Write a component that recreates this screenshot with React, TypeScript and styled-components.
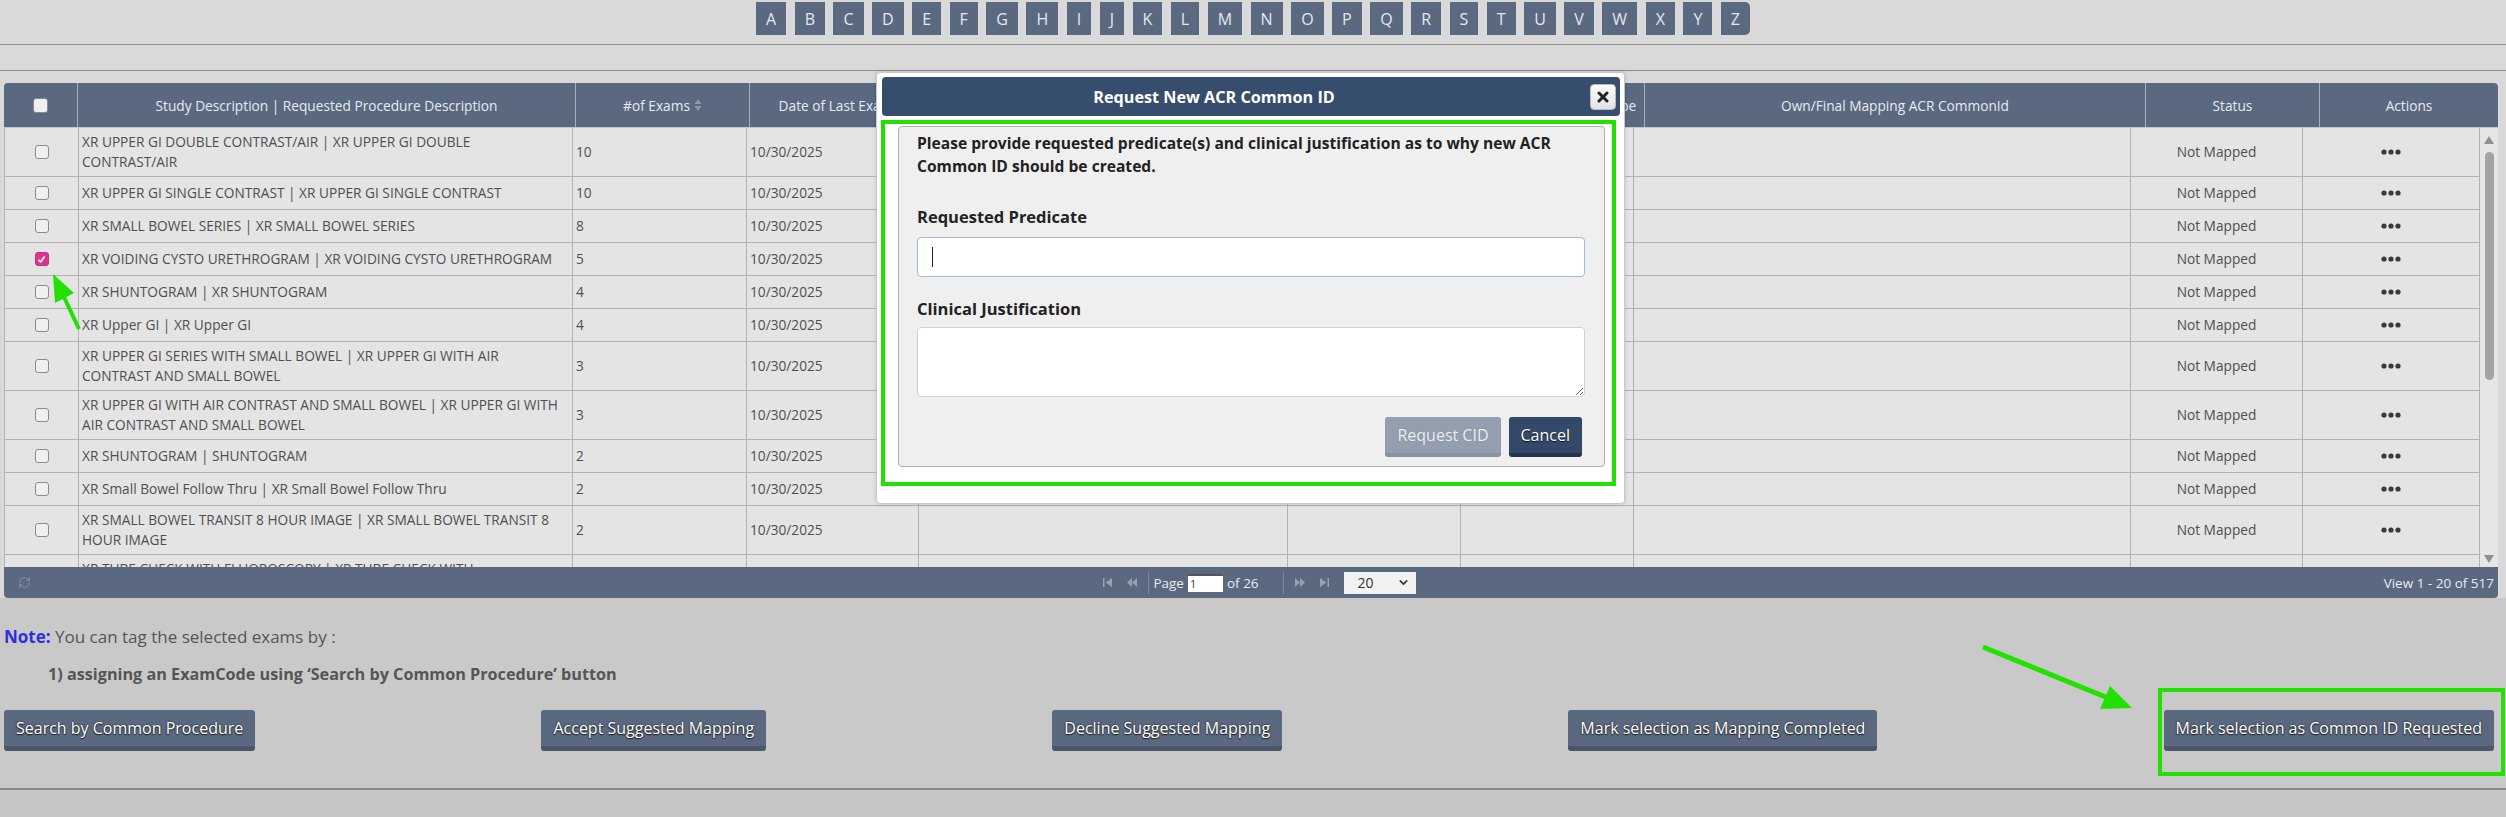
import React from "react";
import styled, { createGlobalStyle } from "styled-components";
import { RefreshCw, ChevronDown } from "lucide-react";

const Global = createGlobalStyle`
  html, body { margin: 0; padding: 0; }
  body { font-family: "Open Sans", "Liberation Sans", sans-serif; background: #c6c6c6; }
  * { box-sizing: border-box; }
`;

const Page = styled.div`
  position: relative;
  width: 2506px;
  height: 817px;
  overflow: hidden;
  display: flex;
  flex-direction: column;
  background: #c6c6c6;
`;

const TopArea = styled.div`
  background: #d9d9d9;
`;

const AlphaBar = styled.div`
  height: 45px;
  display: flex;
  justify-content: center;
  align-items: flex-start;
  gap: 8.5px;
  padding-top: 2px;
  border-bottom: 1px solid #8c8c8c;
`;

const Letter = styled.span`
  height: 33px;
  padding: 0 10px;
  background: #5a6880;
  color: #e4e9f0;
  font-size: 16px;
  display: flex;
  align-items: center;
  &:last-child {
    border-radius: 0 5px 5px 0;
  }
`;

const Band = styled.div`
  height: 26px;
  border-bottom: 1px solid #8c8c8c;
`;

const GridWrap = styled.div`
  margin: 12px 8px 0 4px;
  width: 2494px;
`;

const headCols = "74px 498px 174px 173px 372px 174px 176px 501px 174px 178px";
const bodyCols = "74px 494px 174px 172px 369px 173px 173px 497px 172px 177px";

const HeaderRow = styled.div`
  height: 45px;
  display: grid;
  grid-template-columns: ${headCols};
  background: #5a6880;
  border-radius: 4px 4px 0 0;
  border-bottom: 1px solid #c3c8d0;
  overflow: hidden;
`;

const HeadCell = styled.div`
  display: flex;
  align-items: center;
  justify-content: center;
  gap: 4px;
  color: #e6ebf1;
  font-size: 13.7px;
  border-right: 1px solid #a6afbd;
  white-space: nowrap;
  overflow: hidden;
  &:last-child {
    border-right: none;
  }
`;

const BodyWrap = styled.div`
  height: 439px;
  display: flex;
  background: #e4e4e4;
`;

const BodyRows = styled.div`
  width: 2476px;
  flex: none;
  overflow: hidden;
  border-left: 1px solid #b4b4b4;
`;

const Row = styled.div`
  display: grid;
  grid-template-columns: ${bodyCols};
  min-height: 33px;
  border-bottom: 1px solid #b2b2b2;
  background: #e4e4e4;
`;

const Cell = styled.div<{ $center?: boolean; $wide?: boolean }>`
  display: flex;
  align-items: center;
  justify-content: ${(p) => (p.$center ? "center" : "flex-start")};
  padding: 4px ${(p) => (p.$wide ? "11px" : "3px")} 4px 3px;
  border-right: 1px solid #b2b2b2;
  color: #4f4f4f;
  font-size: 13.7px;
  line-height: 20px;
`;

const Check = styled.span<{ $checked?: boolean; $size?: number }>`
  width: ${(p) => p.$size ?? 14}px;
  height: ${(p) => p.$size ?? 14}px;
  border-radius: 3px;
  border: 1px solid ${(p) => (p.$checked ? "#c62b7c" : "#8a8a8a")};
  background: ${(p) => (p.$checked ? "#d9368c" : "#f0f0f0")};
  display: inline-flex;
  align-items: center;
  justify-content: center;
`;

const Scrollbar = styled.div`
  width: 18px;
  flex: none;
  background: #e6e6e6;
  display: flex;
  flex-direction: column;
  align-items: center;
  padding: 8px 0 4px;
`;

const Thumb = styled.div`
  width: 9px;
  height: 228px;
  margin-top: 8px;
  border-radius: 5px;
  background: #a3a3a3;
`;

const ScrollGap = styled.div`
  flex: 1;
`;

const Pager = styled.div`
  height: 31px;
  background: #5a6880;
  border-radius: 0 0 4px 4px;
  display: grid;
  grid-template-columns: 1fr auto 1fr;
  align-items: center;
  padding: 0 4px 0 14px;
  color: #e8ecf1;
  font-size: 13.5px;
`;

const PagerCenter = styled.div`
  display: flex;
  align-items: center;
`;

const PagerSep = styled.span<{ $left?: number }>`
  width: 1px;
  height: 22px;
  background: #7d8aa0;
  margin: 0 4px 0 ${(p) => p.$left ?? 4}px;
`;

const PagerIcon = styled.span`
  display: inline-flex;
  width: 24px;
  justify-content: center;
  opacity: 0.55;
`;

const PageInput = styled.span`
  width: 35px;
  height: 18px;
  margin: 0 4px;
  background: #fff;
  border-top: 2px solid #555;
  color: #333;
  font-size: 11px;
  padding-left: 2px;
  line-height: 15px;
`;

const SelectBox = styled.span`
  width: 72px;
  height: 22px;
  margin-left: 8px;
  background: #f2f2f2;
  color: #333;
  display: flex;
  align-items: center;
  justify-content: space-between;
  padding: 0 6px 0 14px;
  font-size: 14px;
`;

const ViewText = styled.span`
  justify-self: end;
`;

const NoteSection = styled.div`
  background: #c9c9c9;
  padding: 29px 12px 37px 4px;
  border-bottom: 2px solid #8a8a8a;
`;

const NoteLine = styled.div`
  font-size: 17px;
  line-height: 20px;
  color: #555;
`;

const NoteLabel = styled.b`
  color: #3030dd;
`;

const NoteItem = styled.div`
  margin: 17px 0 0 44px;
  font-size: 16.2px;
  line-height: 20px;
  font-weight: bold;
  color: #555;
`;

const ButtonRow = styled.div`
  margin-top: 26px;
  display: flex;
  justify-content: space-between;
`;

const ActionButton = styled.button`
  height: 41px;
  padding: 0 12px;
  border: none;
  border-bottom: 5px solid #4b566a;
  border-radius: 3px;
  background: #5a6880;
  color: #fff;
  font-family: "Open Sans", "Liberation Sans", sans-serif;
  font-size: 16px;
  text-shadow: 0 0 2px #222, 0 1px 1px #222;
`;

const Modal = styled.div`
  position: absolute;
  left: 876px;
  top: 72px;
  width: 749px;
  height: 432px;
  background: #fff;
  border: 1px solid #c8c8c8;
  border-radius: 4px;
  padding: 4px 4px 0 5px;
  box-shadow: 0 0 4px rgba(0, 0, 0, 0.15);
`;

const TitleBar = styled.div`
  height: 39px;
  background: #364d6e;
  border-radius: 4px;
  display: flex;
  align-items: center;
  padding-right: 4px;
`;

const Title = styled.div`
  flex: 1;
  text-align: center;
  padding-right: 44px;
  color: #fff;
  font-weight: bold;
  font-size: 16.2px;
`;

const CloseBtn = styled.span`
  width: 26px;
  height: 26px;
  border-radius: 4px;
  border: 1px solid #bbb;
  background: linear-gradient(#fbfbfb, #e2e2e2);
  display: flex;
  align-items: center;
  justify-content: center;
`;

const GreenFrame = styled.div`
  margin: 4px 4px 0 -1px;
  height: 366px;
  border: 4px solid #22e000;
  padding: 2px 7px 15px 13px;
`;

const Panel = styled.div`
  height: 100%;
  background: #efefef;
  border: 1px solid #b0b0b0;
  border-radius: 4px;
  padding: 5px 19px 9px 18px;
  display: flex;
  flex-direction: column;
`;

const Desc = styled.p`
  margin: 0;
  font-weight: bold;
  font-size: 15.6px;
  line-height: 23px;
  color: #222;
`;

const FieldLabel = styled.div<{ $top: number }>`
  margin-top: ${(p) => p.$top}px;
  font-weight: bold;
  font-size: 16.5px;
  line-height: 22px;
  color: #222;
`;

const InputBox = styled.div`
  margin-top: 9px;
  height: 40px;
  background: #fff;
  border: 1px solid #9dbbd9;
  border-radius: 4px;
  display: flex;
  align-items: center;
  padding-left: 14px;
`;

const Caret = styled.span`
  width: 1px;
  height: 20px;
  background: #222;
`;

const TextArea = styled.textarea`
  margin-top: 7px;
  height: 70px;
  width: 100%;
  background: #fff;
  border: 1px solid #d2d2d2;
  border-radius: 4px;
  font-family: inherit;
`;

const ModalButtons = styled.div`
  margin-top: 20px;
  margin-right: 3px;
  display: flex;
  justify-content: flex-end;
  gap: 8px;
`;

const ModalButton = styled.button<{ $primary?: boolean }>`
  height: 40px;
  padding: 0 12px;
  border: none;
  border-radius: 3px;
  border-bottom: 4px solid ${(p) => (p.$primary ? "#233550" : "#8693a3")};
  background: ${(p) => (p.$primary ? "#34486a" : "#939eae")};
  color: ${(p) => (p.$primary ? "#fff" : "#eef1f5")};
  font-family: "Open Sans", "Liberation Sans", sans-serif;
  font-size: 16px;
  text-shadow: ${(p) => (p.$primary ? "0 1px 1px #111" : "0 0 1px #7a8594")};
`;

const Annotations = styled.svg`
  position: absolute;
  left: 0;
  top: 0;
  pointer-events: none;
`;

const letters = "ABCDEFGHIJKLMNOPQRSTUVWXYZ".split("");

const headers = [
  "",
  "Study Description | Requested Procedure Description",
  "#of Exams",
  "Date of Last Exam",
  "Suggested ACR Common ID",
  "Suggested Mapping",
  "Suggested Mapping Type",
  "Own/Final Mapping ACR CommonId",
  "Status",
  "Actions",
];

type R = { d: string; n: number; checked?: boolean };
const rows: R[] = [
  { d: "XR UPPER GI DOUBLE CONTRAST/AIR | XR UPPER GI DOUBLE CONTRAST/AIR", n: 10 },
  { d: "XR UPPER GI SINGLE CONTRAST | XR UPPER GI SINGLE CONTRAST", n: 10 },
  { d: "XR SMALL BOWEL SERIES | XR SMALL BOWEL SERIES", n: 8 },
  { d: "XR VOIDING CYSTO URETHROGRAM | XR VOIDING CYSTO URETHROGRAM", n: 5, checked: true },
  { d: "XR SHUNTOGRAM | XR SHUNTOGRAM", n: 4 },
  { d: "XR Upper GI | XR Upper GI", n: 4 },
  { d: "XR UPPER GI SERIES WITH SMALL BOWEL | XR UPPER GI WITH AIR CONTRAST AND SMALL BOWEL", n: 3 },
  { d: "XR UPPER GI WITH AIR CONTRAST AND SMALL BOWEL | XR UPPER GI WITH AIR CONTRAST AND SMALL BOWEL", n: 3 },
  { d: "XR SHUNTOGRAM | SHUNTOGRAM", n: 2 },
  { d: "XR Small Bowel Follow Thru | XR Small Bowel Follow Thru", n: 2 },
  { d: "XR SMALL BOWEL TRANSIT 8 HOUR IMAGE | XR SMALL BOWEL TRANSIT 8 HOUR IMAGE", n: 2 },
  { d: "XR TUBE CHECK WITH FLUOROSCOPY | XR TUBE CHECK WITH FLUOROSCOPY", n: 2 },
];

const SortIcon = () => (
  <svg width="8" height="14" viewBox="0 0 8 14">
    <path d="M4 1 L7.5 6 H0.5 Z" fill="#8d98aa" />
    <path d="M4 13 L7.5 8 H0.5 Z" fill="#8d98aa" />
  </svg>
);

const Dots = () => (
  <svg width="20" height="6" viewBox="0 0 20 6">
    <circle cx="3" cy="3" r="2.6" fill="#3a3a3a" />
    <circle cx="10" cy="3" r="2.6" fill="#3a3a3a" />
    <circle cx="17" cy="3" r="2.6" fill="#3a3a3a" />
  </svg>
);

const Tri = ({ dir }: { dir: "up" | "down" }) => (
  <svg width="10" height="8" viewBox="0 0 10 8">
    <path d={dir === "up" ? "M5 0 L10 8 H0 Z" : "M5 8 L10 0 H0 Z"} fill="#8f8f8f" />
  </svg>
);

const PagerArrow = ({ d }: { d: string }) => (
  <svg width="10" height="9" viewBox="0 0 10 9">
    <path d={d} fill="#c9d0da" />
  </svg>
);

export default function App() {
  return (
    <Page>
      <Global />
      <TopArea>
        <AlphaBar>
          {letters.map((l) => (
            <Letter key={l}>{l}</Letter>
          ))}
        </AlphaBar>
        <Band />
        <GridWrap>
          <HeaderRow>
            {headers.map((h, i) => (
              <HeadCell key={i}>
                {i === 0 ? <Check $size={15} /> : h}
                {i === 2 && <SortIcon />}
              </HeadCell>
            ))}
          </HeaderRow>
          <BodyWrap>
            <BodyRows>
              {rows.map((r, i) => (
                <Row key={i}>
                  <Cell $center>
                    <Check $checked={r.checked}>
                      {r.checked && (
                        <svg width="9" height="9" viewBox="0 0 9 9">
                          <path d="M1.5 4.8 L3.6 7 L7.6 1.6" stroke="#fff" strokeWidth="1.7" fill="none" />
                        </svg>
                      )}
                    </Check>
                  </Cell>
                  <Cell $wide>{r.d}</Cell>
                  <Cell>{r.n}</Cell>
                  <Cell>10/30/2025</Cell>
                  <Cell />
                  <Cell />
                  <Cell />
                  <Cell />
                  <Cell $center>Not Mapped</Cell>
                  <Cell $center>
                    <Dots />
                  </Cell>
                </Row>
              ))}
            </BodyRows>
            <Scrollbar>
              <Tri dir="up" />
              <Thumb />
              <ScrollGap />
              <Tri dir="down" />
            </Scrollbar>
          </BodyWrap>
          <Pager>
            <RefreshCw size={13} color="#7f8ba0" />
            <PagerCenter>
              <PagerIcon>
                <PagerArrow d="M0 0 H1.5 V9 H0 Z M9 0 V9 L2.5 4.5 Z" />
              </PagerIcon>
              <PagerIcon>
                <PagerArrow d="M5 0 V9 L0 4.5 Z M10 0 V9 L5 4.5 Z" />
              </PagerIcon>
              <PagerSep />
              <span>Page</span>
              <PageInput>1</PageInput>
              <span>of 26</span>
              <PagerSep $left={24} />
              <PagerIcon>
                <PagerArrow d="M0 0 V9 L5 4.5 Z M5 0 V9 L10 4.5 Z" />
              </PagerIcon>
              <PagerIcon>
                <PagerArrow d="M1 0 V9 L7.5 4.5 Z M8.5 0 H10 V9 H8.5 Z" />
              </PagerIcon>
              <SelectBox>
                20 <ChevronDown size={13} color="#333" strokeWidth={3} />
              </SelectBox>
            </PagerCenter>
            <ViewText>View 1 - 20 of 517</ViewText>
          </Pager>
        </GridWrap>
      </TopArea>
      <NoteSection>
        <NoteLine>
          <NoteLabel>Note:</NoteLabel> You can tag the selected exams by :
        </NoteLine>
        <NoteItem>1) assigning an ExamCode using ‘Search by Common Procedure’ button</NoteItem>
        <ButtonRow>
          <ActionButton>Search by Common Procedure</ActionButton>
          <ActionButton>Accept Suggested Mapping</ActionButton>
          <ActionButton>Decline Suggested Mapping</ActionButton>
          <ActionButton>Mark selection as Mapping Completed</ActionButton>
          <ActionButton>Mark selection as Common ID Requested</ActionButton>
        </ButtonRow>
      </NoteSection>

      <Modal>
        <TitleBar>
          <Title>Request New ACR Common ID</Title>
          <CloseBtn>
            <svg width="12" height="12" viewBox="0 0 12 12">
              <path d="M2 2 L10 10 M10 2 L2 10" stroke="#222" strokeWidth="3" strokeLinecap="round" />
            </svg>
          </CloseBtn>
        </TitleBar>
        <GreenFrame>
          <Panel>
            <Desc>
              Please provide requested predicate(s) and clinical justification as to why new ACR Common ID should be
              created.
            </Desc>
            <FieldLabel $top={28}>Requested Predicate</FieldLabel>
            <InputBox>
              <Caret />
            </InputBox>
            <FieldLabel $top={21}>Clinical Justification</FieldLabel>
            <TextArea />
            <ModalButtons>
              <ModalButton>Request CID</ModalButton>
              <ModalButton $primary>Cancel</ModalButton>
            </ModalButtons>
          </Panel>
        </GreenFrame>
      </Modal>

      <Annotations width="2506" height="817" viewBox="0 0 2506 817">
        <line x1="79" y1="329" x2="64" y2="297" stroke="#22e000" strokeWidth="4" />
        <polygon points="53,274 74,293 55,303" fill="#22e000" />
        <line x1="1983" y1="647" x2="2108" y2="698" stroke="#22e000" strokeWidth="5" />
        <polygon points="2132,708 2100,709 2110,686" fill="#22e000" />
        <rect x="2160" y="690" width="343" height="84" fill="none" stroke="#22e000" strokeWidth="4" />
      </Annotations>
    </Page>
  );
}
